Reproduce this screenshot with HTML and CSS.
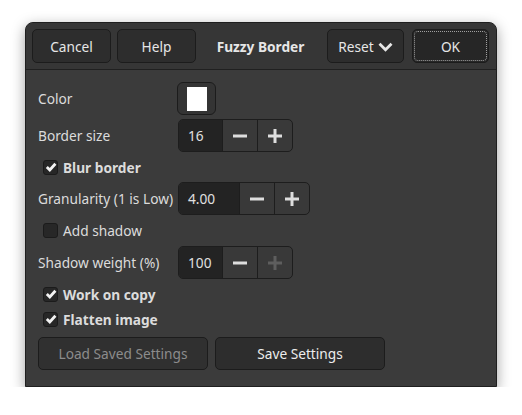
FILE: index.html
```html
<!DOCTYPE html>
<html>
<head>
<meta charset="utf-8">
<link rel="stylesheet" href="styles.css">
</head>
<body>
<div class="dialog">
  <div class="header">
    <div class="hgroup left">
      <button class="btn hbtn">Cancel</button>
      <button class="btn hbtn">Help</button>
    </div>
    <div class="title">Fuzzy Border</div>
    <div class="hgroup right">
      <button class="btn hbtn reset">Reset
        <svg class="chev" width="15" height="10" viewBox="0 0 15 10"><polyline points="1.5,1.8 7.5,7.8 13.5,1.8" fill="none" stroke="#e6e6e6" stroke-width="2.8"/></svg>
      </button>
      <button class="btn hbtn ok"><span class="focus">OK</span></button>
    </div>
  </div>
  <div class="content">
    <div class="row">
      <div class="label">Color</div>
      <button class="colorbtn"><span class="swatch"></span></button>
    </div>
    <div class="row">
      <div class="label">Border size</div>
      <div class="spin">
        <div class="entry narrow">16</div>
        <div class="sbtn"><svg width="14" height="14" viewBox="0 0 14 14"><rect x="0" y="5.5" width="14" height="3" fill="#dedede"/></svg></div>
        <div class="sbtn"><svg width="14" height="14" viewBox="0 0 14 14"><rect x="0" y="5.5" width="14" height="3" fill="#dedede"/><rect x="5.5" y="0" width="3" height="14" fill="#dedede"/></svg></div>
      </div>
    </div>
    <div class="check">
      <span class="box on"><svg width="12" height="12" viewBox="0 0 12 12"><polyline points="1.8,6 4.8,9 10.4,2.8" fill="none" stroke="#f2f2f2" stroke-width="2.8"/></svg></span>
      <span class="ctext bold">Blur border</span>
    </div>
    <div class="row">
      <div class="label">Granularity (1 is Low)</div>
      <div class="spin">
        <div class="entry wide">4.00</div>
        <div class="sbtn"><svg width="14" height="14" viewBox="0 0 14 14"><rect x="0" y="5.5" width="14" height="3" fill="#dedede"/></svg></div>
        <div class="sbtn"><svg width="14" height="14" viewBox="0 0 14 14"><rect x="0" y="5.5" width="14" height="3" fill="#dedede"/><rect x="5.5" y="0" width="3" height="14" fill="#dedede"/></svg></div>
      </div>
    </div>
    <div class="check">
      <span class="box"></span>
      <span class="ctext">Add shadow</span>
    </div>
    <div class="row shift">
      <div class="label">Shadow weight (%)</div>
      <div class="spin">
        <div class="entry narrow">100</div>
        <div class="sbtn"><svg width="14" height="14" viewBox="0 0 14 14"><rect x="0" y="5.5" width="14" height="3" fill="#dedede"/></svg></div>
        <div class="sbtn"><svg width="14" height="14" viewBox="0 0 14 14"><rect x="0" y="5.5" width="14" height="3" fill="#5e5e5e"/><rect x="5.5" y="0" width="3" height="14" fill="#5e5e5e"/></svg></div>
      </div>
    </div>
    <div class="check">
      <span class="box on"><svg width="12" height="12" viewBox="0 0 12 12"><polyline points="1.8,6 4.8,9 10.4,2.8" fill="none" stroke="#f2f2f2" stroke-width="2.8"/></svg></span>
      <span class="ctext bold">Work on copy</span>
    </div>
    <div class="check tight">
      <span class="box on"><svg width="12" height="12" viewBox="0 0 12 12"><polyline points="1.8,6 4.8,9 10.4,2.8" fill="none" stroke="#f2f2f2" stroke-width="2.8"/></svg></span>
      <span class="ctext bold">Flatten image</span>
    </div>
    <div class="actions">
      <button class="btn abtn disabled">Load Saved Settings</button>
      <button class="btn abtn">Save Settings</button>
    </div>
  </div>
</div>
</body>
</html>
```

FILE: styles.css
```css
html, body {
  margin: 0;
  padding: 0;
  background: #ffffff;
}
body {
  font-family: "Noto Sans", "DejaVu Sans", sans-serif;
  font-size: 13.7px;
  color: #dedede;
  padding: 22px 0 0 25px;
}
.dialog {
  width: 470px;
  background: #3b3b3b;
  border: 1px solid #1f1f1f;
  border-radius: 8px 8px 0 0;
  box-shadow: 0 4px 14px rgba(0, 0, 0, 0.38);
}
.header {
  display: grid;
  grid-template-columns: 1fr auto 1fr;
  align-items: center;
  padding: 6px 7px 6px 6px;
  background: #363636;
  border-bottom: 1px solid #202020;
  border-radius: 7px 7px 0 0;
}
.hgroup {
  display: flex;
}
.hgroup.left {
  gap: 6px;
  justify-content: flex-start;
}
.hgroup.right {
  gap: 8px;
  justify-content: flex-end;
}
.title {
  font-weight: bold;
  color: #e6e6e6;
}
.btn {
  font-family: inherit;
  font-size: 13.7px;
  color: #e6e6e6;
  background: #2d2d2d;
  border: 1px solid #1c1c1c;
  border-radius: 5px;
  padding: 0;
  box-sizing: border-box;
  display: flex;
  align-items: center;
  justify-content: center;
}
.hbtn {
  width: 79px;
  height: 34px;
}
.reset, .ok {
  width: 77px;
}
.reset {
  gap: 4px;
}
.chev {
  margin-top: 1px;
}
.ok {
  background: #262626;
  padding: 1px;
}
.focus {
  width: 100%;
  height: 100%;
  box-sizing: border-box;
  border: 1px dotted #a0a0a0;
  border-radius: 4px;
  display: flex;
  align-items: center;
  justify-content: center;
}
.content {
  display: flex;
  flex-direction: column;
  gap: 4px;
  padding: 12px 12px 16px 12px;
}
.row {
  display: flex;
  align-items: center;
  height: 33px;
}
.row.shift {
  margin-top: 1px;
}
.label {
  width: 140px;
  color: #dcdcdc;
}
.colorbtn {
  width: 39px;
  height: 33px;
  margin-left: -1px;
  background: #343434;
  border: 1px solid #1c1c1c;
  border-radius: 6px;
  padding: 0;
  display: flex;
  align-items: center;
  justify-content: center;
}
.swatch {
  width: 20px;
  height: 24px;
  background: #ffffff;
}
.spin {
  display: flex;
  height: 33px;
  box-sizing: border-box;
  border: 1px solid #1d1d1d;
  border-radius: 5px;
  overflow: hidden;
  background: #393939;
}
.entry {
  background: #232323;
  color: #e0e0e0;
  display: flex;
  align-items: center;
  padding-left: 9px;
  box-sizing: border-box;
}
.entry.narrow {
  width: 43px;
}
.entry.wide {
  width: 60px;
}
.sbtn {
  width: 34px;
  border-left: 1px solid #1d1d1d;
  display: flex;
  align-items: center;
  justify-content: center;
}
.check {
  display: flex;
  align-items: center;
  height: 22px;
  padding-left: 5px;
}
.check.tight {
  margin-top: -1px;
}
.box {
  width: 15px;
  height: 15px;
  box-sizing: border-box;
  background: #272727;
  border: 1px solid #1b1b1b;
  border-radius: 3px;
  display: flex;
  align-items: center;
  justify-content: center;
}
.ctext {
  margin-left: 5px;
  color: #dcdcdc;
}
.ctext.bold {
  font-weight: bold;
}
.actions {
  display: flex;
  gap: 7px;
  margin-top: 3px;
}
.abtn {
  width: 170px;
  height: 33px;
  color: #ececec;
}
.abtn.disabled {
  color: #8c8c8c;
  background: #303030;
}
```
